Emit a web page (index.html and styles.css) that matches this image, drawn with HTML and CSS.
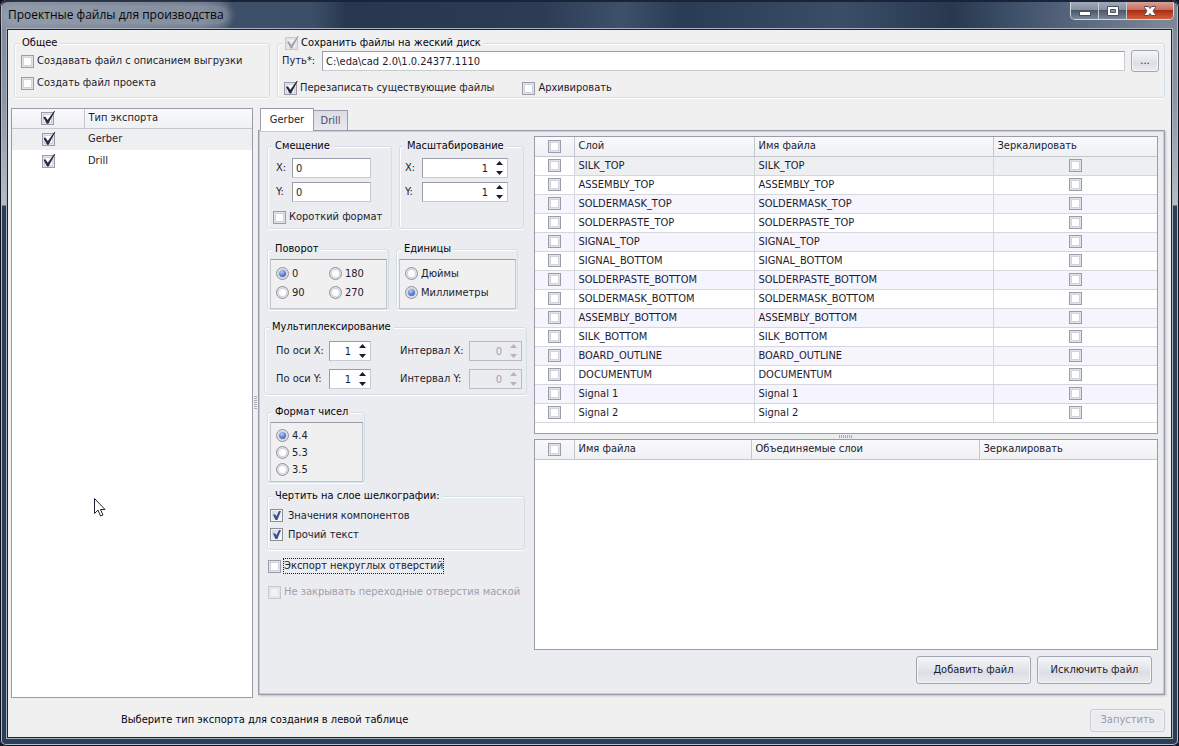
FILE: index.html
```html
<!DOCTYPE html>
<html lang="ru">
<head>
    <meta charset="UTF-8">
    <meta name="viewport" content="width=device-width, initial-scale=1.0">
    <title>Проектные файлы для производства</title>
    <link rel="stylesheet" href="styles.css">
</head>
<body>
    <div class="window">
        <header class="titlebar">
            <h1 class="title">Проектные файлы для производства</h1>
            <div class="window-buttons">
                <button type="button" class="win-btn" aria-label="Свернуть">
                    <svg width="14" height="12" viewBox="0 0 14 12"><rect x="1.500" y="6.500" width="11" height="4" fill="#fff" stroke="#4a5262"/></svg>
                </button>
                <button type="button" class="win-btn" aria-label="Развернуть">
                    <svg width="14" height="12" viewBox="0 0 14 12"><path d="M1.500 1.500h11v9h-11z" fill="#fff" stroke="#4a5262"/><path d="M4.500 4.500h5v3h-5z" fill="#8c95a5" stroke="#4a5262"/></svg>
                </button>
                <button type="button" class="win-btn win-close" aria-label="Закрыть">
                    <svg width="14" height="12" viewBox="0 0 14 12"><path d="M1.500 1.500h4L7 3.500l1.500-2h4v1L10 6l2.500 3.500v1h-4L7 8.500l-1.500 2h-4v-1L4 6 1.500 2.500z" fill="#fff" stroke="#5b4650"/></svg>
                </button>
            </div>
        </header>

        <main class="client">
            <div class="top-row">
                <fieldset class="group group-common">
                    <legend>Общее</legend>
                    <label class="check"><input type="checkbox"> Создавать файл с описанием выгрузки</label>
                    <label class="check"><input type="checkbox"> Создать файл проекта</label>
                </fieldset>

                <fieldset class="group group-save">
                    <legend><label class="check"><input type="checkbox" class="big" checked disabled> Сохранить файлы на жеский диск</label></legend>
                    <div class="path-row">
                        <label for="path">Путь*:</label>
                        <input type="text" id="path" class="text path" value="C:\eda\cad 2.0\1.0.24377.1110">
                        <button type="button" class="btn btn-browse">...</button>
                    </div>
                    <div class="save-options">
                        <label class="check"><input type="checkbox" class="big" checked> Перезаписать существующие файлы</label>
                        <label class="check"><input type="checkbox"> Архивировать</label>
                    </div>
                </fieldset>
            </div>

            <div class="main-row">
                <div class="export-list">
                    <table class="grid export-table">
                        <colgroup><col class="col-mark"><col></colgroup>
                        <thead>
                            <tr><th><input type="checkbox" class="big" aria-label="Все типы" checked></th><th>Тип экспорта</th></tr>
                        </thead>
                        <tbody>
                            <tr class="selected"><td><input type="checkbox" class="big" aria-label="Gerber" checked></td><td>Gerber</td></tr>
                            <tr><td><input type="checkbox" class="big" aria-label="Drill" checked></td><td>Drill</td></tr>
                        </tbody>
                    </table>
                </div>
                <div class="splitter-v"><span class="grip"></span></div>

                <div class="tab-control">
                    <div class="tabs" role="tablist">
                        <button type="button" class="tab active" role="tab" aria-selected="true">Gerber</button>
                        <button type="button" class="tab" role="tab" aria-selected="false">Drill</button>
                    </div>

                    <div class="pane" role="tabpanel">
                        <form class="options">
                            <div class="option-row row-offset">
                                <fieldset class="group group-offset">
                                    <legend>Смещение</legend>
                                    <div class="fields">
                                        <label for="offX">X:</label>
                                        <input type="text" id="offX" class="text" value="0">
                                        <label for="offY">Y:</label>
                                        <input type="text" id="offY" class="text" value="0">
                                    </div>
                                    <label class="check"><input type="checkbox"> Короткий формат</label>
                                </fieldset>
                                <fieldset class="group group-scale">
                                    <legend>Масштабирование</legend>
                                    <div class="fields">
                                        <label for="scaleX">X:</label>
                                        <span class="spin"><input type="number" id="scaleX" class="text" value="1"><svg class="arrows" width="7" height="14" viewBox="0 0 7 14"><path d="M0 4h7L3.500 0zM0 10h7L3.500 14z"/></svg></span>
                                        <label for="scaleY">Y:</label>
                                        <span class="spin"><input type="number" id="scaleY" class="text" value="1"><svg class="arrows" width="7" height="14" viewBox="0 0 7 14"><path d="M0 4h7L3.500 0zM0 10h7L3.500 14z"/></svg></span>
                                    </div>
                                </fieldset>
                            </div>

                            <div class="option-row row-rotate">
                                <fieldset class="group group-rotate">
                                    <legend>Поворот</legend>
                                    <div class="radio-panel two-cols">
                                        <label class="check"><input type="radio" name="rotate" checked> 0</label>
                                        <label class="check"><input type="radio" name="rotate"> 180</label>
                                        <label class="check"><input type="radio" name="rotate"> 90</label>
                                        <label class="check"><input type="radio" name="rotate"> 270</label>
                                    </div>
                                </fieldset>
                                <fieldset class="group group-units">
                                    <legend>Единицы</legend>
                                    <div class="radio-panel">
                                        <label class="check"><input type="radio" name="units"> Дюймы</label>
                                        <label class="check"><input type="radio" name="units" checked> Миллиметры</label>
                                    </div>
                                </fieldset>
                            </div>

                            <fieldset class="group group-multi">
                                <legend>Мультиплексирование</legend>
                                <div class="multi-fields">
                                    <label for="axisX">По оси X:</label>
                                    <span class="spin"><input type="number" id="axisX" class="text" value="1"><svg class="arrows" width="7" height="14" viewBox="0 0 7 14"><path d="M0 4h7L3.500 0zM0 10h7L3.500 14z"/></svg></span>
                                    <label for="stepX" class="step">Интервал X:</label>
                                    <span class="spin off"><input type="number" id="stepX" class="text" value="0" disabled><svg class="arrows" width="7" height="14" viewBox="0 0 7 14"><path d="M0 4h7L3.500 0zM0 10h7L3.500 14z"/></svg></span>
                                    <label for="axisY">По оси Y:</label>
                                    <span class="spin"><input type="number" id="axisY" class="text" value="1"><svg class="arrows" width="7" height="14" viewBox="0 0 7 14"><path d="M0 4h7L3.500 0zM0 10h7L3.500 14z"/></svg></span>
                                    <label for="stepY" class="step">Интервал Y:</label>
                                    <span class="spin off"><input type="number" id="stepY" class="text" value="0" disabled><svg class="arrows" width="7" height="14" viewBox="0 0 7 14"><path d="M0 4h7L3.500 0zM0 10h7L3.500 14z"/></svg></span>
                                </div>
                            </fieldset>

                            <fieldset class="group group-format">
                                <legend>Формат чисел</legend>
                                <div class="radio-panel dense">
                                    <label class="check"><input type="radio" name="format" checked> 4.4</label>
                                    <label class="check"><input type="radio" name="format"> 5.3</label>
                                    <label class="check"><input type="radio" name="format"> 3.5</label>
                                </div>
                            </fieldset>

                            <fieldset class="group group-silk">
                                <legend>Чертить на слое шелкографии:</legend>
                                <label class="check"><input type="checkbox" class="classic" checked> Значения компонентов</label>
                                <label class="check"><input type="checkbox" class="classic" checked> Прочий текст</label>
                            </fieldset>

                            <div class="extra">
                                <label class="check"><input type="checkbox"> <span class="focused">Экспорт некруглых отверстий</span></label>
                                <label class="check disabled"><input type="checkbox" disabled> Не закрывать переходные отверстия маской</label>
                            </div>
                        </form>

                        <div class="layers">
                            <div class="grid-box layer-box">
                                <table class="grid layer-table">
                                    <colgroup><col class="col-check"><col class="col-layer"><col class="col-file"><col></colgroup>
                                    <thead>
                                        <tr><th><input type="checkbox" aria-label="Все слои"></th><th>Слой</th><th>Имя файла</th><th>Зеркалировать</th></tr>
                                    </thead>
                                    <tbody>
                                        <tr class="selected"><td><input type="checkbox" aria-label="Выбрать"></td><td>SILK_TOP</td><td>SILK_TOP</td><td><input type="checkbox" aria-label="Зеркалировать"></td></tr>
                                        <tr><td><input type="checkbox" aria-label="Выбрать"></td><td>ASSEMBLY_TOP</td><td>ASSEMBLY_TOP</td><td><input type="checkbox" aria-label="Зеркалировать"></td></tr>
                                        <tr><td><input type="checkbox" aria-label="Выбрать"></td><td>SOLDERMASK_TOP</td><td>SOLDERMASK_TOP</td><td><input type="checkbox" aria-label="Зеркалировать"></td></tr>
                                        <tr><td><input type="checkbox" aria-label="Выбрать"></td><td>SOLDERPASTE_TOP</td><td>SOLDERPASTE_TOP</td><td><input type="checkbox" aria-label="Зеркалировать"></td></tr>
                                        <tr><td><input type="checkbox" aria-label="Выбрать"></td><td>SIGNAL_TOP</td><td>SIGNAL_TOP</td><td><input type="checkbox" aria-label="Зеркалировать"></td></tr>
                                        <tr><td><input type="checkbox" aria-label="Выбрать"></td><td>SIGNAL_BOTTOM</td><td>SIGNAL_BOTTOM</td><td><input type="checkbox" aria-label="Зеркалировать"></td></tr>
                                        <tr><td><input type="checkbox" aria-label="Выбрать"></td><td>SOLDERPASTE_BOTTOM</td><td>SOLDERPASTE_BOTTOM</td><td><input type="checkbox" aria-label="Зеркалировать"></td></tr>
                                        <tr><td><input type="checkbox" aria-label="Выбрать"></td><td>SOLDERMASK_BOTTOM</td><td>SOLDERMASK_BOTTOM</td><td><input type="checkbox" aria-label="Зеркалировать"></td></tr>
                                        <tr><td><input type="checkbox" aria-label="Выбрать"></td><td>ASSEMBLY_BOTTOM</td><td>ASSEMBLY_BOTTOM</td><td><input type="checkbox" aria-label="Зеркалировать"></td></tr>
                                        <tr><td><input type="checkbox" aria-label="Выбрать"></td><td>SILK_BOTTOM</td><td>SILK_BOTTOM</td><td><input type="checkbox" aria-label="Зеркалировать"></td></tr>
                                        <tr><td><input type="checkbox" aria-label="Выбрать"></td><td>BOARD_OUTLINE</td><td>BOARD_OUTLINE</td><td><input type="checkbox" aria-label="Зеркалировать"></td></tr>
                                        <tr><td><input type="checkbox" aria-label="Выбрать"></td><td>DOCUMENTUM</td><td>DOCUMENTUM</td><td><input type="checkbox" aria-label="Зеркалировать"></td></tr>
                                        <tr><td><input type="checkbox" aria-label="Выбрать"></td><td>Signal 1</td><td>Signal 1</td><td><input type="checkbox" aria-label="Зеркалировать"></td></tr>
                                        <tr><td><input type="checkbox" aria-label="Выбрать"></td><td>Signal 2</td><td>Signal 2</td><td><input type="checkbox" aria-label="Зеркалировать"></td></tr>
                                    </tbody>
                                </table>
                            </div>
                            <div class="splitter-h"><span class="grip"></span></div>
                            <div class="grid-box merge-box">
                                <table class="grid merge-table">
                                    <colgroup><col class="col-check"><col class="col-name"><col class="col-merged"><col></colgroup>
                                    <thead>
                                        <tr><th><input type="checkbox" aria-label="Все файлы"></th><th>Имя файла</th><th>Объединяемые слои</th><th>Зеркалировать</th></tr>
                                    </thead>
                                </table>
                            </div>
                            <div class="layer-buttons">
                                <button type="button" class="btn btn-file">Добавить файл</button>
                                <button type="button" class="btn btn-file">Исключить файл</button>
                            </div>
                        </div>
                    </div>
                </div>
            </div>

            <footer class="footer">
                <span class="hint">Выберите тип экспорта для создания в левой таблице</span>
                <button type="button" class="btn btn-run" disabled>Запустить</button>
            </footer>
        </main>
    </div>

    <svg class="cursor" width="13" height="20" viewBox="0 0 13 20"><path d="M1.500 1.500v15l3.500-3.500 2.500 6 2.500-1-2.500-5.500h4.500z" fill="#fff" stroke="#222233"/></svg>
</body>
</html>
```
FILE: styles.css
```css
* {
    box-sizing: border-box;
}

body {
    margin: 0;
    background: #0b1020;
    font-family: "DejaVu Sans Condensed", "DejaVu Sans", sans-serif;
    font-size: 11px;
    line-height: 14px;
    color: #1c1c30;
}

input, button {
    font: inherit;
    color: inherit;
    margin: 0;
}

/* window frame */
.window {
    display: flex;
    flex-direction: column;
    min-height: 100vh;
    padding: 0 7px 8px;
    border-radius: 7px 7px 6px 6px;
    background: linear-gradient(#7c8697, #8c96a5 100px, #b4bcc6 205px, #2b3d57 206px, #2b3d57);
    box-shadow: inset 0 0 0 1px #10141f, inset 0 0 0 2px #b3bcc9;
}

.titlebar {
    display: flex;
    justify-content: space-between;
    height: 29px;
    margin: 0 -5px;
    border-top: 2px solid #1b2436;
    border-radius: 6px 6px 0 0;
    background: linear-gradient(to right, #8690a0, #68758a 200px, #3d4f69 230px, #3d4f68 310px, #27374f 345px, #2c3c55 540px, #3f506b 620px, #2a3b55 680px, #3c4d68 840px, #27384f 950px, #42536d 1020px, #7b8696 1160px);
}

.title {
    margin: 4px 0 0 2px;
    padding: 0 4px;
    height: 18px;
    line-height: 18px;
    font-family: "Open Sans", "Noto Sans", sans-serif;
    font-size: 12px;
    font-weight: normal;
    color: #05050a;
    border-radius: 9px;
    background: rgba(160, 168, 180, 0.5);
    box-shadow: 0 0 6px 3px rgba(160, 168, 180, 0.5);
}

.window-buttons {
    display: flex;
    height: 18px;
    margin-right: 3px;
    border: 1px solid #d0d6dd;
    border-top: 0;
    border-radius: 0 0 5px 5px;
    overflow: hidden;
}

.win-btn {
    display: flex;
    align-items: center;
    justify-content: center;
    width: 28px;
    padding: 0;
    border: 0;
    border-right: 1px solid #c5ccd5;
    background: linear-gradient(#a3abb8, #8690a0 45%, #4a566a 50%, #7c8799);
}

.win-close {
    width: 46px;
    border-right: 0;
    background: linear-gradient(#d9a297, #c8705f 45%, #a92c17 50%, #d1613a);
}

.client {
    flex: 1;
    display: flex;
    flex-direction: column;
    padding: 6px 6px 0 3px;
    border: 1px solid #1d232f;
    box-shadow: 0 0 0 1px #a9b3c0;
    background: #f0f0f0;
}

/* group boxes */
.group {
    min-width: 0;
    margin: 0;
    padding: 0;
    border: 1px solid #d3dee6;
    border-radius: 3px;
    box-shadow: inset 1px 1px #fff, 0 1px #fff;
}

.group legend {
    margin-left: 4px;
    padding: 0 3px;
    height: 14px;
    color: #05050f;
    background: #ebecef;
}

.check {
    display: flex;
    align-items: center;
    gap: 3px;
    white-space: nowrap;
}

.check.disabled {
    color: #a0a0ac;
}

/* check boxes and radios */
input[type="checkbox"], input[type="radio"] {
    appearance: none;
    position: relative;
    flex: none;
    display: block;
    width: 13px;
    height: 13px;
    border: 1px solid #9a9cac;
    background: #fff;
    box-shadow: inset 0 0 0 1px #e1e3e9, inset 0 0 0 2px #d0d4dc;
}

input[type="checkbox"]:disabled {
    border-color: #c6c8d0;
    background: #f2f2f5;
    box-shadow: inset 0 0 0 2px #e4e5ea;
}

input.big:checked::after {
    content: "";
    position: absolute;
    left: 1px;
    top: -2px;
    width: 12px;
    height: 13px;
    background: #2a2a40;
    clip-path: polygon(0 50%, 16% 45%, 36% 72%, 92% 0, 100% 0, 42% 100%, 30% 100%);
}

input.big:disabled::after {
    background: #a3a4ae;
}

input.classic {
    border-color: #8a8f93;
    background: linear-gradient(135deg, #cdd3da, #fff);
    box-shadow: inset 0 0 0 1px #f4f4f4;
}

input.classic:checked::after {
    content: "";
    position: absolute;
    left: 2px;
    top: 1px;
    width: 8px;
    height: 9px;
    background: #3f4f94;
    clip-path: polygon(0 40%, 25% 35%, 42% 58%, 75% 0, 100% 0, 55% 100%, 30% 100%);
}

input[type="radio"] {
    border-radius: 50%;
    border-color: #8e909e;
}

input[type="radio"]:checked::after {
    content: "";
    position: absolute;
    left: 2px;
    top: 2px;
    width: 7px;
    height: 7px;
    border-radius: 50%;
    background: radial-gradient(circle at 40% 30%, #b9cdf8, #5a7bd6 55%, #2f4a9c);
}

/* text boxes */
.text {
    width: 100%;
    height: 20px;
    padding: 0 3px;
    border: 1px solid #c9cbd3;
    border-top-color: #9a9cac;
    border-left-color: #9a9cac;
    border-radius: 0;
    background: #fff;
    outline: none;
}

.spin {
    position: relative;
    display: block;
}

.spin .text {
    appearance: textfield;
    padding-right: 19px;
    text-align: right;
}

.spin .text::-webkit-inner-spin-button {
    display: none;
}

.arrows {
    position: absolute;
    top: 3px;
    right: 5px;
    fill: #1c1c30;
}

.spin.off .text {
    color: #a0a0ac;
    background: #ebecef;
    border-color: #b8bac4;
}

.spin.off .arrows {
    fill: #b4b5be;
}

/* buttons */
.btn {
    padding: 0;
    border: 1px solid #a3a6b4;
    border-radius: 3px;
    background: linear-gradient(#f6f6f8, #e2e4e9 50%, #dcdee5 60%, #ebecf0);
    box-shadow: inset 0 0 0 1px #f3f4f6;
}

.btn:disabled {
    color: #9b9ba8;
    border-color: #c8cad2;
    background: #ebecef;
}

.btn-browse {
    width: 28px;
    height: 22px;
}

.btn-file {
    width: 115px;
    height: 28px;
}

.btn-run {
    width: 75px;
    height: 23px;
}

/* top row */
.top-row {
    display: flex;
    gap: 7px;
    height: 62px;
    margin: 0 0 10px 3px;
}

.top-row legend {
    background: #f0f0f0;
}

.group-common {
    width: 256px;
}

.group-common .check {
    height: 22px;
    padding-left: 6px;
}

.group-save {
    flex: 1;
}

.path-row {
    display: flex;
    align-items: center;
    height: 22px;
    padding: 0 5px 0 4px;
}

.path-row label {
    width: 40px;
}

.path {
    flex: 1;
    margin-right: 6px;
}

.save-options {
    display: flex;
    gap: 28px;
    margin: 9px 0 0 6px;
}

/* export types */
.main-row {
    flex: 1;
    display: flex;
}

.export-list {
    width: 242px;
    border: 1px solid #9a9cac;
    background: #fff;
}

.grid {
    width: 100%;
    table-layout: fixed;
    border-collapse: collapse;
}

.grid th {
    height: 19px;
    padding: 0 4px;
    border-bottom: 1px solid #c5c7cf;
    background: linear-gradient(#f9f9fa, #eff0f3);
    font-weight: normal;
    text-align: left;
}

.grid th + th {
    border-left: 1px solid #c5c7cf;
}

.grid td {
    padding: 0 4px;
}

.grid input {
    margin: 0 auto;
}

.grid .selected td {
    background: #eeeff1;
}

.col-mark {
    width: 72px;
}

.export-table td {
    height: 22px;
}

.splitter-v {
    display: flex;
    align-items: center;
    justify-content: center;
    width: 5px;
}

.splitter-v .grip {
    width: 3px;
    height: 14px;
    background: repeating-linear-gradient(#a8a9b2 0 1px, transparent 1px 2px);
}

/* tabs */
.tab-control {
    flex: 1;
    display: flex;
    flex-direction: column;
    min-width: 0;
    margin-bottom: 3px;
}

.tabs {
    display: flex;
    align-items: flex-end;
    height: 23px;
    padding-left: 2px;
    z-index: 1;
}

.tab {
    height: 21px;
    width: 35px;
    margin-left: -1px;
    padding: 0;
    border: 1px solid #9a9cac;
    background: linear-gradient(#dcdde3, #e8e9ee);
    color: #4a4a66;
}

.tab.active {
    height: 23px;
    width: 54px;
    margin-left: 0;
    border-bottom-color: #fff;
    background: #fff;
    color: #1c1c30;
}

.pane {
    flex: 1;
    display: flex;
    margin-top: -1px;
    padding: 5px 6px 0 5px;
    border: 1px solid #9a9cac;
    background: #ebecef;
    box-shadow: inset 0 0 0 1px #c9cbd3, 1px 1px 2px #c0c0c8;
}

.options {
    flex: none;
    width: 270px;
    padding: 3px 0 0 3px;
}

.option-row {
    display: flex;
    gap: 7px;
}

.group-offset, .group-scale {
    width: 125px;
    height: 90px;
}

.fields {
    display: grid;
    grid-template-columns: 16px 79px;
    gap: 4px 0;
    align-items: center;
    padding: 5px 0 0 8px;
}

.group-scale .fields {
    grid-template-columns: 17px 86px;
    padding-left: 5px;
}

.group-offset .check {
    margin: 8px 0 0 5px;
}

.row-rotate {
    margin-top: 13px;
}

.group-rotate, .group-units {
    width: 122px;
    height: 68px;
}

.radio-panel {
    height: 50px;
    margin: 3px 1px 0 2px;
    padding: 4px 0 0 5px;
    border: 1px solid #c5c7cf;
    border-top-color: #9a9cac;
    background: #f0f0f0;
}

.radio-panel .check {
    height: 19px;
}

.two-cols {
    display: grid;
    grid-template-columns: 53px 1fr;
    align-content: start;
}

.group-multi {
    width: 263px;
    height: 75px;
    margin: 10px 0 0 -3px;
}

.multi-fields {
    display: grid;
    grid-template-columns: 53px 42px 98px 53px;
    gap: 8px 0;
    align-items: center;
    padding: 7px 0 0 11px;
}

.multi-fields .step {
    padding-left: 29px;
}

.group-format {
    width: 98px;
    height: 78px;
    margin-top: 10px;
}

.radio-panel.dense {
    height: 60px;
    padding-top: 4px;
}

.dense .check {
    height: 17px;
}

.group-silk {
    width: 258px;
    height: 61px;
    margin-top: 6px;
}

.group-silk .check {
    height: 19px;
    padding-left: 2px;
    gap: 5px;
}

.group-silk legend {
    margin-bottom: 3px;
}

.extra {
    padding: 3px 0 0 1px;
}

.extra .check {
    height: 26px;
}

.focused {
    outline: 1px dotted #1c1c30;
}

/* layer tables */
.layers {
    flex: 1;
    display: flex;
    flex-direction: column;
    min-width: 0;
}

.grid-box {
    border: 1px solid #9a9cac;
    background: #fff;
}

.layer-box {
    height: 298px;
}

.merge-box {
    flex: 1;
}

.col-check {
    width: 39px;
}

.col-layer {
    width: 180px;
}

.col-file {
    width: 239px;
}

.col-name {
    width: 177px;
}

.col-merged {
    width: 228px;
}

.layer-table td {
    height: 19px;
    border-bottom: 1px solid #d6d7de;
}

.layer-table td + td {
    border-left: 1px solid #d6d7de;
}

.layer-table tr:nth-child(odd) td {
    background: #f6f4fd;
}

.layer-table .selected td {
    background: #eeeff1 !important;
}

.layer-table .selected td:first-child {
    background: #fff !important;
}

.splitter-h {
    display: flex;
    align-items: center;
    justify-content: center;
    height: 5px;
}

.splitter-h .grip {
    width: 14px;
    height: 3px;
    background: repeating-linear-gradient(to right, #a8a9b2 0 1px, transparent 1px 2px);
}

.layer-buttons {
    display: flex;
    justify-content: flex-end;
    gap: 6px;
    padding: 6px 6px 10px 0;
}

.footer {
    display: flex;
    align-items: center;
    justify-content: space-between;
    height: 39px;
    padding-top: 5px;
}

.hint {
    padding-left: 110px;
    color: #05050f;
}

.cursor {
    position: absolute;
    left: 93px;
    top: 497px;
}
```
